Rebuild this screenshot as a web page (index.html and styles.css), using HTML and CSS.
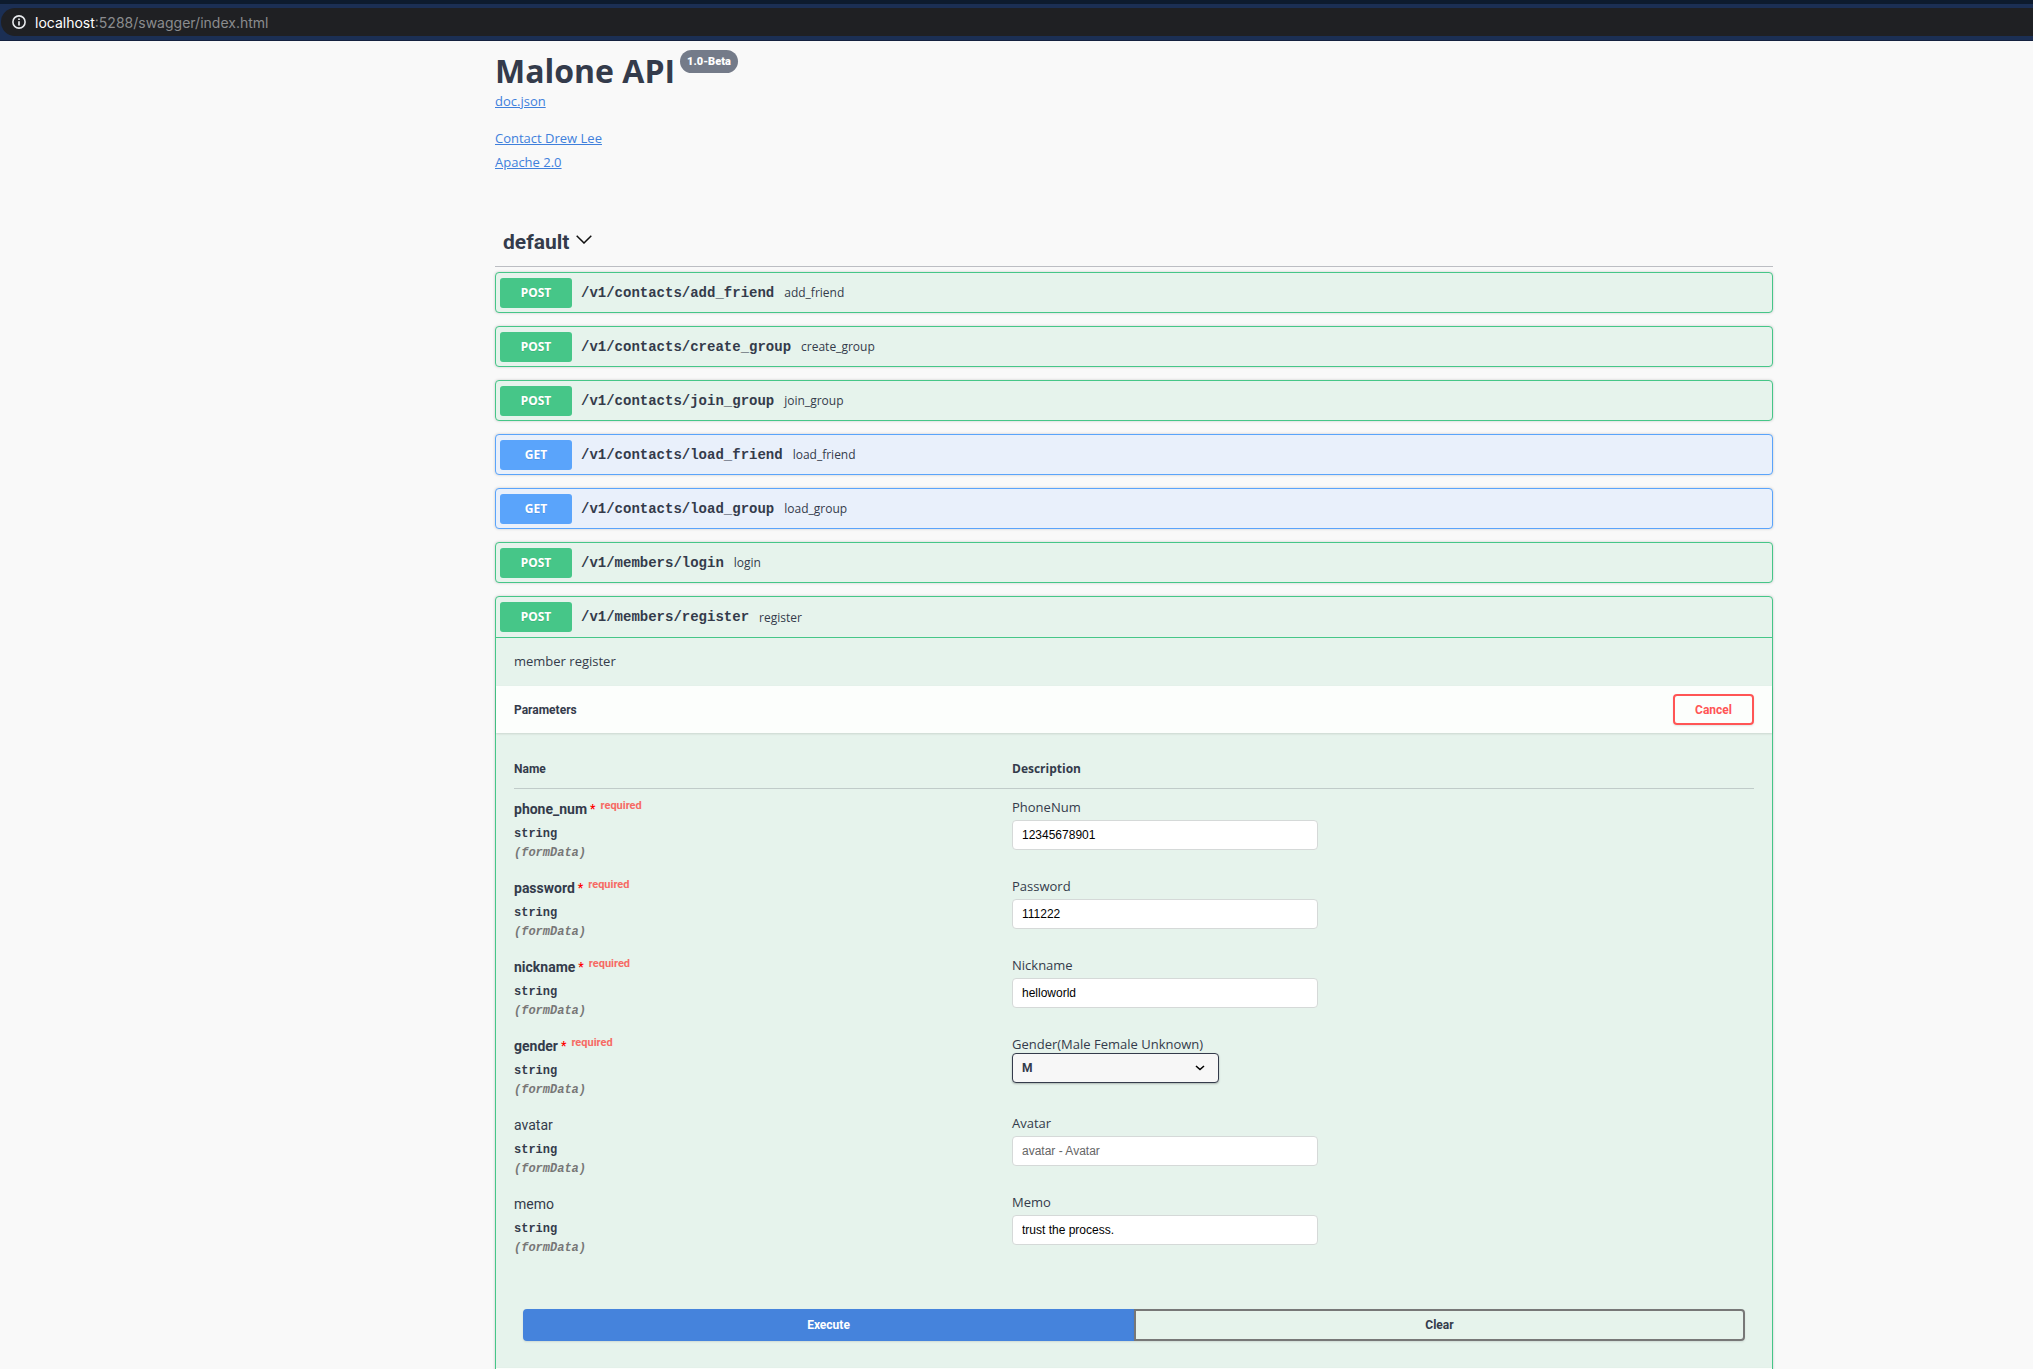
FILE: index.html
```html
<!DOCTYPE html>
<html lang="en">
<head>
<meta charset="utf-8">
<title>Malone API</title>
<link rel="stylesheet" href="styles.css">
</head>
<body>
<header class="browser-bar">
  <div class="address">
    <svg class="info-icon" viewBox="0 0 14 14" aria-hidden="true"><circle cx="7" cy="7" r="6.1" fill="none" stroke="#e8eaed" stroke-width="1.6"/><path d="M7 6.2v4.2M7 3.4v1.7" stroke="#e8eaed" stroke-width="1.7"/></svg>
    <span class="host">localhost</span><span class="path-text">:5288/swagger/index.html</span>
  </div>
</header>
<main class="page">
  <section class="info">
    <h1 class="title">Malone API<span class="version">1.0-Beta</span></h1>
    <a class="spec-link" href="#">doc.json</a>
    <a class="contact-link" href="#">Contact Drew Lee</a>
    <a class="license-link" href="#">Apache 2.0</a>
  </section>

  <h2 class="tag">default
    <svg class="tag-arrow" viewBox="0 0 16 9" aria-hidden="true"><path d="M.7.7 8 8 15.3.7" fill="none" stroke="#111" stroke-width="1.5"/></svg>
  </h2>

  <div class="operations">
    <article class="op post"><button class="summary"><span class="method">POST</span><span class="route">/v1/contacts/add_friend</span><span class="brief">add_friend</span></button></article>
    <article class="op post"><button class="summary"><span class="method">POST</span><span class="route">/v1/contacts/create_group</span><span class="brief">create_group</span></button></article>
    <article class="op post"><button class="summary"><span class="method">POST</span><span class="route">/v1/contacts/join_group</span><span class="brief">join_group</span></button></article>
    <article class="op get"><button class="summary"><span class="method">GET</span><span class="route">/v1/contacts/load_friend</span><span class="brief">load_friend</span></button></article>
    <article class="op get"><button class="summary"><span class="method">GET</span><span class="route">/v1/contacts/load_group</span><span class="brief">load_group</span></button></article>
    <article class="op post"><button class="summary"><span class="method">POST</span><span class="route">/v1/members/login</span><span class="brief">login</span></button></article>
    <article class="op post open">
      <button class="summary"><span class="method">POST</span><span class="route">/v1/members/register</span><span class="brief">register</span></button>
      <p class="description">member register</p>
      <div class="section-header">
        <h3 class="section-title">Parameters</h3>
        <button class="btn cancel">Cancel</button>
      </div>
      <div class="params-wrap">
        <table class="params">
          <thead><tr><th class="name-head">Name</th><th class="desc-head">Description</th></tr></thead>
          <tbody>
            <tr>
              <td><div class="name required">phone_num<span class="star">*</span><span class="req">required</span></div><div class="type">string</div><div class="in">(formData)</div></td>
              <td><label class="label" for="phone">PhoneNum</label><input class="field" id="phone" type="text" value="12345678901"></td>
            </tr>
            <tr>
              <td><div class="name required">password<span class="star">*</span><span class="req">required</span></div><div class="type">string</div><div class="in">(formData)</div></td>
              <td><label class="label" for="password">Password</label><input class="field" id="password" type="text" value="111222"></td>
            </tr>
            <tr>
              <td><div class="name required">nickname<span class="star">*</span><span class="req">required</span></div><div class="type">string</div><div class="in">(formData)</div></td>
              <td><label class="label" for="nickname">Nickname</label><input class="field" id="nickname" type="text" value="helloworld"></td>
            </tr>
            <tr>
              <td><div class="name required">gender<span class="star">*</span><span class="req">required</span></div><div class="type">string</div><div class="in">(formData)</div></td>
              <td><label class="label" for="gender">Gender(Male Female Unknown)</label><select class="choice" id="gender"><option>M</option><option>F</option><option>U</option></select></td>
            </tr>
            <tr>
              <td><div class="name">avatar</div><div class="type">string</div><div class="in">(formData)</div></td>
              <td><label class="label" for="avatar">Avatar</label><input class="field" id="avatar" type="text" placeholder="avatar - Avatar"></td>
            </tr>
            <tr>
              <td><div class="name">memo</div><div class="type">string</div><div class="in">(formData)</div></td>
              <td><label class="label" for="memo">Memo</label><input class="field" id="memo" type="text" value="trust the process."></td>
            </tr>
          </tbody>
        </table>
      </div>
      <div class="actions">
        <button class="btn execute">Execute</button>
        <button class="btn clear">Clear</button>
      </div>
      <div class="section-header"></div>
    </article>
  </div>
</main>
</body>
</html>
```
FILE: styles.css
```css
* { box-sizing: border-box; }

body {
  margin: 0;
  height: 100vh;
  overflow: hidden;
  background: #f9f9f9;
  color: #343b4b;
  font-family: "Open Sans", sans-serif;
  font-size: 12px;
}

h1, h2, h3, p { margin: 0; }

button { font: inherit; color: inherit; cursor: pointer; }

/* Browser address bar */
.browser-bar {
  height: 41px;
  padding: 4px 0 4px 1px;
  border-top: 4px solid #0d1b2e;
  border-bottom: 1px solid #14213f;
  background: #1b2f54;
}

.address {
  display: flex;
  align-items: center;
  height: 28px;
  padding-left: 11px;
  border-radius: 14px 0 0 14px;
  background: #1f2023;
  color: #8b8c8e;
  font-family: Inter, sans-serif;
  font-size: 14px;
}

.info-icon { width: 14px; height: 14px; margin-right: 9px; }
.host { color: #fff; }

/* Page column */
.page {
  padding: 0 260px 0 495px;
}

.info { display: flex; flex-direction: column; align-items: flex-start; }

.title {
  display: flex;
  align-items: flex-start;
  gap: 5px;
  padding-top: 9px;
  font-size: 32px;
  line-height: 42px;
}

.version {
  padding: 0 7px;
  border-radius: 12px;
  background: #747b89;
  color: #fff;
  font-family: Roboto, sans-serif;
  font-size: 11px;
  font-weight: 900;
  line-height: 23px;
}

.info a { color: #4080dc; font-size: 13px; line-height: 18px; }
.spec-link { margin-bottom: 19px; }
.contact-link { margin-bottom: 6px; }

.tag {
  display: flex;
  align-items: center;
  gap: 7px;
  height: 50px;
  margin-top: 46px;
  margin-bottom: 5px;
  padding-left: 8px;
  border-bottom: 1px solid #bcbec3;
  font-family: Roboto, sans-serif;
  font-size: 21px;
}

.tag-arrow { width: 16px; height: 9px; margin-bottom: 4px; }

/* Operations */
.operations { display: flex; flex-direction: column; gap: 13px; }

.op {
  border: 1px solid #46c688;
  border-radius: 4px;
  background: #e6f3ec;
  box-shadow: 0 0 3px rgba(0, 0, 0, .19);
}

.op.get { border-color: #5aa4fb; background: #e9f0fb; }

.summary {
  display: flex;
  align-items: center;
  width: 100%;
  height: 39px;
  padding: 4px;
  border: 0;
  background: none;
  text-align: left;
}

.open .summary { height: 41px; border-bottom: 1px solid #46c688; }

.method {
  width: 72px;
  border-radius: 3px;
  background: #46c688;
  color: #fff;
  font-family: "Noto Sans", sans-serif;
  font-size: 12px;
  font-weight: 700;
  line-height: 30px;
  text-align: center;
  text-shadow: 0 1px 0 rgba(0, 0, 0, .1);
}

.get .method { background: #5aa4fb; }

.route {
  margin: 0 10px 0 9px;
  font-family: "Liberation Mono", monospace;
  font-size: 14px;
  font-weight: 700;
}

.description { padding: 14px 18px 16px; font-size: 13px; line-height: 18px; }

.section-header {
  display: flex;
  align-items: center;
  justify-content: space-between;
  height: 47px;
  padding: 0 18px;
  background: rgba(255, 255, 255, .85);
  box-shadow: 0 1px 2px rgba(0, 0, 0, .12);
}

.section-title { font-family: Roboto, sans-serif; font-size: 12px; }

.btn {
  border: 2px solid #777;
  border-radius: 4px;
  background: none;
  font-family: Roboto, sans-serif;
  font-size: 12px;
  font-weight: 700;
  box-shadow: 0 1px 2px rgba(0, 0, 0, .1);
}

.cancel { width: 81px; height: 31px; border-color: #ff5555; color: #ff5555; }

/* Parameter table */
.params-wrap { padding: 18px 18px 0; }

.params { width: 100%; border-collapse: collapse; table-layout: fixed; }

.params th {
  padding: 9px 0 10px;
  border-bottom: 1px solid #c0cbc9;
  line-height: 18px;
  text-align: left;
}

.params .name-head { width: 40%; font-family: Roboto, sans-serif; }
.params td { height: 79px; padding: 9px 0 0; vertical-align: top; }
.params th + th, .params td + td { padding-left: 2px; }

.name {
  display: flex;
  align-items: flex-start;
  height: 26px;
  font-family: Roboto, sans-serif;
  font-size: 14px;
  line-height: 22px;
}

.name.required { font-weight: 700; }
.star { margin: 0 5px 0 3px; color: #f00; font-size: 12px; }
.req { color: #f66a64; font-size: 11px; line-height: 16px; }

.type {
  font-family: "Liberation Mono", monospace;
  font-weight: 700;
  line-height: 20px;
}

.in {
  color: #777;
  font-family: "Liberation Mono", monospace;
  font-style: italic;
  font-weight: 700;
  line-height: 18px;
}

.label { display: block; font-size: 13px; line-height: 18px; }

.field {
  display: block;
  width: 306px;
  height: 30px;
  margin-top: 4px;
  padding: 0 9px;
  border: 1px solid #d5d9d8;
  border-radius: 4px;
  background: #fff;
  color: #000;
  font-family: "Liberation Sans", sans-serif;
  font-size: 12px;
}

.field::placeholder { color: #666; }

.choice {
  display: block;
  width: 207px;
  height: 30px;
  padding: 0 9px;
  border: 1px solid #343b4b;
  border-radius: 4px;
  appearance: none;
  background: #f7f7f7 url("data:image/svg+xml,%3Csvg xmlns='http://www.w3.org/2000/svg' width='10' height='6'%3E%3Cpath d='M1 1l4 3.5 4-3.5' fill='none' stroke='%23000' stroke-width='1.6'/%3E%3C/svg%3E") no-repeat right 13px center;
  box-shadow: 0 1px 2px rgba(0, 0, 0, .25);
  color: #343b4b;
  font-family: Roboto, sans-serif;
  font-size: 12px;
  font-weight: 700;
}

.actions { display: flex; padding: 46px 27px 27px; }
.actions .btn { flex: 1; height: 32px; }
.actions .execute { border-color: #4583dc; border-radius: 4px 0 0 4px; background: #4583dc; color: #fff; }
.actions .clear { border-radius: 0 4px 4px 0; }
```
